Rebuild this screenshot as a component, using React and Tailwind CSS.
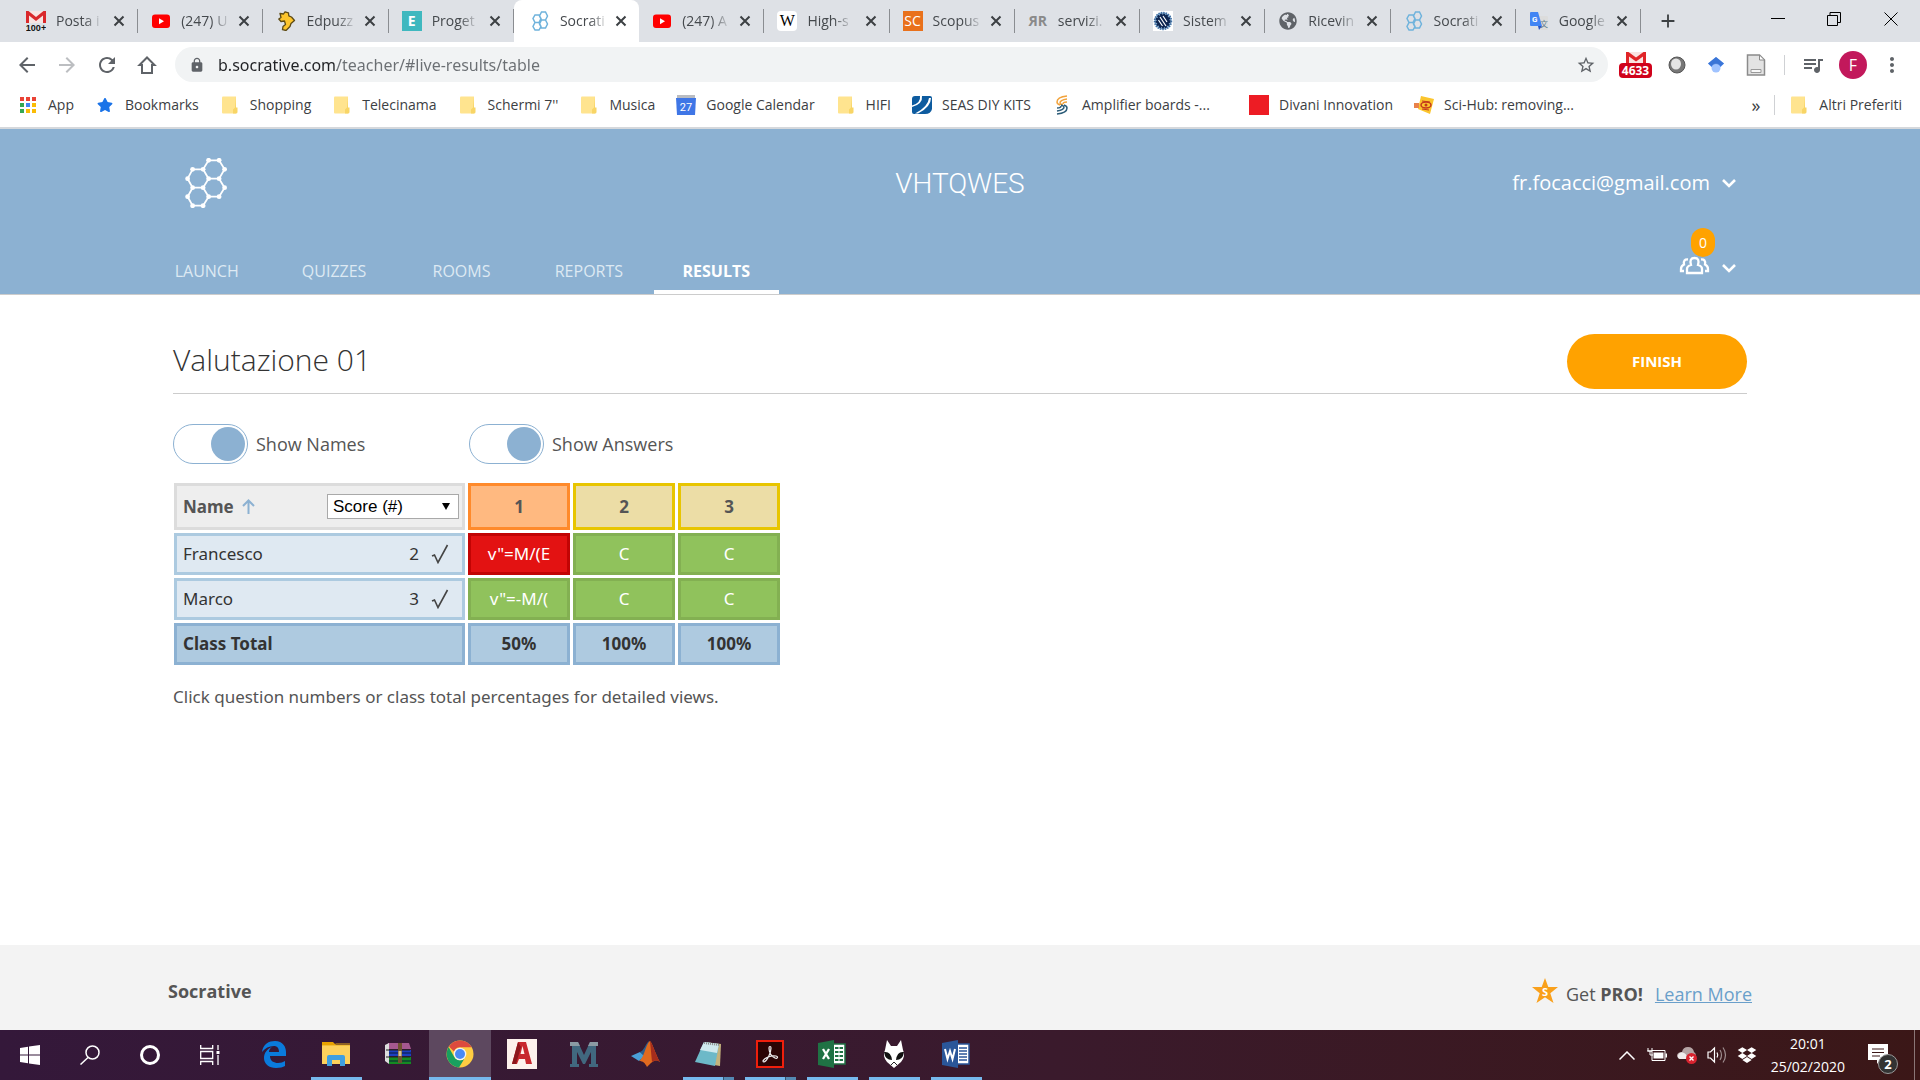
import { MdArrowBack, MdArrowForward, MdRefresh, MdLock, MdStarBorder, MdMoreVert, MdQueueMusic, MdAdd } from 'react-icons/md'
import { FaDropbox, FaGlobeAmericas, FaStar } from 'react-icons/fa'

/* ---------- favicons ---------- */

const GmailIcon = () => (
  <svg viewBox="0 0 20 20" className="h-5 w-5">
    <path d="M0 0h20v12H0z" fill="#f6e4e2" />
    <path d="M0 12V0h2.500L10 6l7.500-6H20v12h-3V4.500L10 10 3 4.500V12z" fill="#d9282b" />
    <text x="10" y="19.500" textAnchor="middle" fontSize="9" fontWeight="700" fontFamily="Liberation Sans, sans-serif" fill="#111">100+</text>
  </svg>
)

const YoutubeIcon = () => (
  <svg viewBox="0 0 20 20" className="h-5 w-5">
    <rect x="1" y="3.500" width="18" height="13.500" rx="3" fill="#f00" />
    <path d="M8 7.300v6l5-3z" fill="#fff" />
  </svg>
)

const EdpuzzleIcon = () => (
  <svg viewBox="0 0 20 20" className="h-5 w-5">
    <path
      d="M4 2.500L7.500 3 9 .8l3.500 1 .3 3L15.500 6l3 3.500-3.500 3-1 3-4 4-3.500-.8L7 15.500l2.500-2L8.500 10 5 10.500 2.800 8 5 6.500z"
      fill="#fdc52c"
      stroke="#5d4a15"
      strokeWidth="1.300"
      strokeLinejoin="round"
    />
  </svg>
)

const LetterIcon = ({ bg, color, children }) => (
  <span className={`flex h-5 w-5 items-center justify-center text-sm leading-5 ${bg} ${color}`}>{children}</span>
)

const SocrativeIcon = () => (
  <svg viewBox="0 0 20 20" className="h-5 w-5" fill="none" stroke="#6fb3dc" strokeWidth="1.500">
    <path d="M11.500 1h4l2 4-2 4h-4l-2-4zM11.500 9h4l2 4-2 4h-4l-2-4zM5 4h4l2 3.500L9 11.500H5L3 7.500zM5 11.500h4l2 4-2 3.500H5l-2-3.500z" />
  </svg>
)

const WikiIcon = () => (
  <span className="flex h-5 w-5 items-center justify-center rounded bg-white font-['Liberation_Serif',serif] text-base leading-5 text-black">W</span>
)

const SealIcon = () => (
  <svg viewBox="0 0 20 20" className="h-5 w-5">
    <path d="M0 0h20v20H0z" fill="#fff" />
    <circle cx="10" cy="10" r="8.500" fill="#7fa9cf" stroke="#3f6fa3" strokeWidth="1.500" strokeDasharray="1.500 1" />
    <circle cx="10" cy="10" r="6.500" fill="#0d2550" strokeDasharray="2 1" stroke="#0d2550" strokeWidth="2" />
    <path d="M7 6l6 9M10 5l4 6M5.500 9l4 6" stroke="#fff" strokeWidth="1.200" />
  </svg>
)

const TranslateIcon = () => (
  <svg viewBox="0 0 20 20" className="h-5 w-5">
    <path d="M9 5h9q1 0 1 1v12q0 1-1 1h-6z" fill="#dcdcdc" />
    <text x="11" y="16" fontSize="8" fontFamily="Noto Sans CJK SC, sans-serif" fill="#607d8b">文</text>
    <path d="M2 1h7l4 14H2q-1 0-1-1V2q0-1 1-1z" fill="#4285f4" />
    <path d="M9 15h4l-3 4z" fill="#2a56c6" />
    <text x="3" y="11" fontSize="8" fontWeight="700" fontFamily="Roboto, sans-serif" fill="#fff">G</text>
  </svg>
)

const tabs = [
  { title: 'Posta i', icon: <GmailIcon /> },
  { title: '(247) U', icon: <YoutubeIcon /> },
  { title: 'Edpuzz', icon: <EdpuzzleIcon /> },
  { title: 'Proget', icon: <LetterIcon bg="bg-[#3fb8bf]" color="text-white font-bold">E</LetterIcon> },
  { title: 'Socrati', icon: <SocrativeIcon />, active: true },
  { title: '(247) A', icon: <YoutubeIcon /> },
  { title: 'High-s', icon: <WikiIcon /> },
  { title: 'Scopus', icon: <LetterIcon bg="bg-[#e9711c]" color="text-white">SC</LetterIcon> },
  { title: 'servizi.', icon: <LetterIcon bg="" color="text-[#8a8a8a] font-bold">ЯR</LetterIcon> },
  { title: 'Sistem', icon: <SealIcon /> },
  { title: 'Ricevin', icon: <FaGlobeAmericas className="h-[18px] w-5 text-[#5f6368]" /> },
  { title: 'Socrati', icon: <SocrativeIcon /> },
  { title: 'Google', icon: <TranslateIcon /> },
]

function Tab({ title, icon, active }) {
  return (
    <div
      className={`flex min-w-0 items-center pr-3 ${
        active ? 'rounded-t-lg bg-white pl-4' : 'my-[9px] border-r border-[#8a8d91] pl-[13px]'
      }`}
    >
      <span className="shrink-0">{icon}</span>
      <a
        href="#"
        className="ml-[10px] whitespace-nowrap text-sm leading-6 text-[#45494d] [mask-image:linear-gradient(to_right,#000_65%,#0003)]"
      >
        {title}
      </a>
      <button aria-label="Close tab" className="ml-auto shrink-0">
        <svg viewBox="0 0 12 12" className="h-3 w-3" stroke="#3c4043" strokeWidth="2"><path d="M1.500 1.500l9 9M10.500 1.500l-9 9" /></svg>
      </button>
    </div>
  )
}

function TabStrip() {
  return (
    <div className="flex h-[42px] justify-between bg-[#dee1e6]">
      <div className="ml-[13px] grid max-w-[1628px] flex-1 grid-cols-13">
        {tabs.map((tab, i) => (
          <Tab key={i} {...tab} />
        ))}
      </div>
      <button aria-label="New tab" className="ml-4 mr-auto text-[#3c4043]">
        <MdAdd className="h-[22px] w-[22px]" />
      </button>
      <div className="flex pb-1">
        <button aria-label="Minimize" className="flex w-14 items-center justify-center">
          <svg viewBox="0 0 14 14" className="h-[14px] w-[14px]"><path d="M0 6.500h14" stroke="#000" /></svg>
        </button>
        <button aria-label="Restore" className="flex w-14 items-center justify-center">
          <svg viewBox="0 0 14 14" className="h-[14px] w-[14px]" fill="none" stroke="#000">
            <path d="M.5 3.500h10v10H.5zM3 3.500v-3h10.500v10H11" />
          </svg>
        </button>
        <button aria-label="Close" className="flex w-[58px] items-center justify-center">
          <svg viewBox="0 0 14 14" className="h-[14px] w-[14px]"><path d="M.5.5l13 13M13.500.5l-13 13" stroke="#000" /></svg>
        </button>
      </div>
    </div>
  )
}

/* ---------- toolbar ---------- */

function Toolbar() {
  return (
    <div className="flex h-[45px] items-center pl-[15px] pr-4 text-[#5f6368]">
      <div className="flex gap-4">
        <button aria-label="Back"><MdArrowBack className="h-6 w-6" /></button>
        <button aria-label="Forward" className="text-[#bcbec1]"><MdArrowForward className="h-6 w-6" /></button>
        <button aria-label="Reload"><MdRefresh className="h-6 w-6" /></button>
        <button aria-label="Home">
          <svg viewBox="0 0 24 24" className="h-6 w-6" fill="none" stroke="currentColor" strokeWidth="2">
            <path d="M4.500 12H7v8h10v-8h2.500L12 4.500z" />
          </svg>
        </button>
      </div>
      <div className="ml-4 flex h-[35px] flex-1 items-center rounded-full bg-[#f1f3f4] pl-[14px] pr-3">
        <label htmlFor="address" aria-label="Address"><MdLock className="h-4 w-4" /></label>
        {/* host name is darker than the path */}
        <input
          id="address"
          type="text"
          defaultValue="b.socrative.com/teacher/#live-results/table"
          className="ml-[13px] flex-1 bg-[linear-gradient(to_right,#202124_119px,#6b6f73_119px)] bg-clip-text font-['Noto_Sans',sans-serif] text-base leading-6 text-transparent caret-black outline-none"
        />
        <button aria-label="Bookmark this page"><MdStarBorder className="h-5 w-5" /></button>
      </div>
      <div className="ml-[11px] flex items-center">
        <button aria-label="Gmail checker" className="flex w-[33px] flex-col items-center">
          <svg viewBox="0 0 20 11" className="h-[11px] w-5">
            <path d="M0 0h20v11H0z" fill="#f9e3e1" />
            <path d="M0 11V0h2.500L10 5.500 17.500 0H20v11h-3V4.500L10 9.500 3 4.500V11z" fill="#e02427" />
          </svg>
          <span className="w-full rounded-sm bg-[#d0021b] text-center text-xs font-bold leading-[15px] text-white">4633</span>
        </button>
        <button aria-label="Opacity extension" className="ml-4">
          <svg viewBox="0 0 18 18" className="h-[18px] w-[18px]">
            <circle cx="9" cy="9" r="8" fill="#777" />
            <ellipse cx="8" cy="8" rx="5" ry="5.500" fill="#e4e4e4" />
            <circle cx="9" cy="9" r="8" fill="none" stroke="#555" strokeWidth="1" />
          </svg>
        </button>
        <button aria-label="Google Scholar" className="ml-5">
          <svg viewBox="0 0 20 20" className="h-5 w-5">
            <path d="M10 2l8 6.500-3.500 3.500h-9L2 8.500z" fill="#4285f4" />
            <circle cx="10" cy="13" r="4.500" fill="#a0c3ff" />
            <path d="M5.500 11q4.500-4 9 0L18 8.500 10 2 2 8.500z" fill="#356ac3" opacity=".6" />
          </svg>
        </button>
        <button aria-label="Page notes" className="ml-5">
          <svg viewBox="0 0 20 22" className="h-[22px] w-5">
            <path d="M1.500 1h12l5 5v15h-17z" fill="#e3e3e3" stroke="#8b8b8b" strokeWidth="1.500" />
            <path d="M13.500 1v5h5z" fill="#fff" stroke="#8b8b8b" />
            <path d="M5 15.500h10v3H5z" fill="#f8f8f8" stroke="#999" />
          </svg>
        </button>
        <span className="ml-[18px] h-5 w-px bg-[#cfd1d4]" />
        <button aria-label="Media controls" className="ml-4"><MdQueueMusic className="h-6 w-6" /></button>
        <button aria-label="Profile" className="ml-[14px] flex h-7 w-7 items-center justify-center rounded-full bg-[#c2185b] text-base leading-none text-white">F</button>
        <button aria-label="Menu" className="ml-[13px]"><MdMoreVert className="h-6 w-6" /></button>
      </div>
    </div>
  )
}

/* ---------- bookmarks ---------- */

const FolderIcon = () => (
  <svg viewBox="0 0 16 18" className="h-[18px] w-4">
    <path d="M1 .5h13v17H1q-1 0-1-1v-15q0-1 1-1z" fill="#ffe48f" />
    <path d="M14 .5v11h1.500v4.500q0 1.500-1.500 1.500h-3v-4l2-2z" fill="#f8d566" />
  </svg>
)

const appColors = ['#ea4335', '#ea4335', '#ea4335', '#34a853', '#4285f4', '#fbbc05', '#34a853', '#fbbc05', '#fbbc05']

const AppsIcon = () => (
  <svg viewBox="0 0 16 16" className="h-4 w-4">
    {appColors.map((color, i) => (
      <rect key={i} x={(i % 3) * 6} y={Math.floor(i / 3) * 6} width="4" height="4" fill={color} />
    ))}
  </svg>
)

const CalendarIcon = () => (
  <svg viewBox="0 0 20 20" className="h-5 w-5">
    <path d="M1 0h18v4H1z" fill="#b9bcc2" />
    <path d="M0 3h20l-1 17H1z" fill="#3f76e6" />
    <text x="10" y="16" textAnchor="middle" fontSize="11" fontFamily="Roboto, sans-serif" fill="#fff">27</text>
  </svg>
)

const SeasIcon = () => (
  <svg viewBox="0 0 20 20" className="h-5 w-5">
    <path d="M3 1h15q2 0 2 2v11q-1 5-7 5H2q-2 0-2-2V4q0-3 3-3z" fill="#0d5b9f" />
    <path d="M8 1h2q1 8-10 11v-1.500Q9 8 8 1zM17 3h2q0 9-13 15.500H3Q16 12 17 3z" fill="#fff" />
  </svg>
)

const AmplifierIcon = () => (
  <svg viewBox="0 0 14 20" className="h-5 w-[14px]" fill="none" strokeWidth="1.500">
    <path d="M12 1Q2 2 2 7q0 2 3 3M12 4Q5 5 5 8q0 1 3 2M12 7Q8 7 8 9" stroke="#f2a33c" />
    <path d="M2 19q10-1 10-6 0-2-3-3M2 16q7-1 7-4 0-1-3-2M2 13q4 0 4-2" stroke="#2c5c78" />
  </svg>
)

const SciHubIcon = () => (
  <svg viewBox="0 0 20 20" className="h-5 w-5">
    <path d="M7 1l13 3-4 15L4 14z" fill="#fbc52d" />
    <path d="M0 8h5v5H0z" fill="#e9824a" />
    <ellipse cx="12" cy="10" rx="5" ry="3" fill="none" stroke="#c4391d" strokeWidth="1.500" />
    <circle cx="12" cy="10" r="1.500" fill="#c4391d" />
    <path d="M8 6l8 1M8 14l7 1" stroke="#c4391d" />
  </svg>
)

const bookmarks = [
  { label: 'App', icon: <AppsIcon /> },
  { label: 'Bookmarks', icon: <FaStar className="h-4 w-4 text-[#1a73e8]" /> },
  { label: 'Shopping', icon: <FolderIcon /> },
  { label: 'Telecinama', icon: <FolderIcon /> },
  { label: "Schermi 7''", icon: <FolderIcon /> },
  { label: 'Musica', icon: <FolderIcon /> },
  { label: 'Google Calendar', icon: <CalendarIcon /> },
  { label: 'HIFI', icon: <FolderIcon /> },
  { label: 'SEAS DIY KITS', icon: <SeasIcon /> },
  { label: 'Amplifier boards -...', icon: <AmplifierIcon />, truncated: true },
  { label: 'Divani Innovation', icon: <span className="block h-5 w-5 bg-[#ed1c24]" /> },
  { label: 'Sci-Hub: removing...', icon: <SciHubIcon />, truncated: true },
]

const Bookmark = ({ label, icon, truncated }) => (
  <a href="#" className={`flex items-center gap-[10px] whitespace-nowrap ${truncated ? 'min-w-[176px]' : ''}`}>
    <span className="flex w-5 justify-center">{icon}</span>
    {label}
  </a>
)

function BookmarksBar() {
  return (
    <div className="flex h-[42px] items-center justify-between border-b-2 border-[#d5d8dc] pb-1 pl-[18px] pr-[18px] text-sm text-[#3c4043]">
      <nav aria-label="Bookmarks" className="flex items-center gap-[21px]">
        {bookmarks.map((b) => (
          <Bookmark key={b.label} {...b} />
        ))}
      </nav>
      <div className="flex items-center">
        <button aria-label="More bookmarks" className="text-lg leading-5">»</button>
        <span className="mx-[14px] h-5 w-px bg-[#cfd1d4]" />
        <Bookmark label="Altri Preferiti" icon={<FolderIcon />} />
      </div>
    </div>
  )
}

/* ---------- Socrative header ---------- */

const logoNodes = [
  [23.6, 2.3], [34.1, 2.3], [7.6, 11.3], [18.1, 11.3], [39.6, 11.3], [2.6, 20.7], [23.6, 20.7], [34.1, 20.7],
  [7.6, 29.7], [18.1, 29.7], [39.6, 29.7], [2.6, 38.7], [23.6, 38.7], [34.1, 38.7], [7.6, 47.7], [18.1, 47.7],
]

const Logo = () => (
  <svg viewBox="0 0 42 50" className="h-[50px] w-[42px]">
    <path
      d="M23.600 2.300H34.100L39.600 11.300 34.100 20.700H23.600L18.100 11.300zM7.600 11.300H18.100L23.600 20.700 18.100 29.700H7.600L2.600 20.700zM34.100 20.700L39.600 29.700 34.100 38.700H23.600L18.100 29.700M7.600 29.700L2.600 38.700 7.600 47.700H18.100L23.600 38.700"
      fill="none"
      stroke="#fff"
      strokeWidth="1.800"
    />
    {logoNodes.map(([x, y]) => (
      <circle key={`${x}-${y}`} cx={x} cy={y} r="2.400" fill="#fff" />
    ))}
  </svg>
)

const Chevron = () => (
  <svg viewBox="0 0 14 9" className="h-[9px] w-[14px]" fill="none" stroke="#fff" strokeWidth="2.600">
    <path d="M1 1l6 6 6-6" />
  </svg>
)

const navItems = ['LAUNCH', 'QUIZZES', 'ROOMS', 'REPORTS', 'RESULTS']

function Header() {
  return (
    <header className="border-b border-[#ccc] bg-[#8cb1d2] text-white">
      <div className="mx-auto max-w-[1574px] pt-[29px]">
        <div className="grid grid-cols-3 items-center">
          <a href="#" aria-label="Socrative home" className="ml-3 justify-self-start"><Logo /></a>
          <div className="justify-self-center pt-[2px] font-[Roboto,sans-serif] text-[28px] font-light leading-8">VHTQWES</div>
          <button className="mr-[11px] flex items-center gap-3 justify-self-end text-xl leading-7">
            fr.focacci@gmail.com
            <Chevron />
          </button>
        </div>
        <div className="mt-5 flex items-end justify-between">
          <nav className="-ml-[29px] grid max-w-[635px] flex-1 grid-cols-5 gap-[2px]">
            {navItems.map((item) => (
              <a
                key={item}
                href="#"
                className={`border-b-4 pb-[7px] text-center text-base leading-6 ${
                  item === 'RESULTS' ? 'border-white font-bold' : 'border-transparent text-[#dde9f3]'
                }`}
              >
                {item}
              </a>
            ))}
          </nav>
          <button aria-label="Students" className="mb-[19px] mr-[11px] flex h-[47px] items-end gap-3">
            <span className="relative">
              <svg viewBox="0 0 31 19" className="h-[19px] w-[31px]" fill="none" stroke="#fff" strokeWidth="2.300">
                <path d="M12 9Q10 2 15.500 2T19 9q4 1 4 4v4H8v-4q0-3 4-4z" />
                <path d="M9 3.500Q4 3 5 8.500 2 10 2 13v2h3M22 3.500q5-.5 4 5 3 1.500 3 4.500v2h-3" />
              </svg>
              <span className="absolute -top-[28px] left-3 flex h-[29px] w-6 items-center justify-center rounded-full bg-[#ffa200] text-sm">0</span>
            </span>
            <span className="mb-[2px]"><Chevron /></span>
          </button>
        </div>
      </div>
    </header>
  )
}

/* ---------- results ---------- */

function Toggle({ id, label }) {
  return (
    <div className="flex items-center gap-2">
      <input
        id={id}
        type="checkbox"
        defaultChecked
        className="relative h-10 w-[75px] appearance-none rounded-full border border-[#8cb1d2] bg-white before:absolute before:left-[2px] before:top-[2px] before:h-[34px] before:w-[34px] before:rounded-full before:bg-[#8cb1d2] checked:before:left-[37px]"
      />
      <label htmlFor={id} className="font-['Open_Sans',sans-serif] text-lg text-[#555]">{label}</label>
    </div>
  )
}

const questions = [
  { number: 1, total: '50%', style: 'border-[#ff8a2b] bg-[#ffb980]' },
  { number: 2, total: '100%', style: 'border-[#e8c500] bg-[#ecdda6]' },
  { number: 3, total: '100%', style: 'border-[#e8c500] bg-[#ecdda6]' },
]

const students = [
  { name: 'Francesco', score: 2, answers: [{ text: 'v"=M/(E', correct: false }, { text: 'C', correct: true }, { text: 'C', correct: true }] },
  { name: 'Marco', score: 3, answers: [{ text: 'v"=-M/(', correct: true }, { text: 'C', correct: true }, { text: 'C', correct: true }] },
]

const CheckIcon = () => (
  <svg viewBox="0 0 18 20" className="h-5 w-[18px]" fill="none" stroke="#444" strokeWidth="1.600">
    <path d="M1 12l2.500-1 3.500 7.500L16.500 1" />
  </svg>
)

function ResultsTable() {
  return (
    <table className="-ml-[2px] mt-4 border-separate border-spacing-[3px] text-[17px] leading-6 text-[#333]">
      <thead>
        <tr className="h-[47px] text-[#555]">
          <th className="w-[291px] border-[3px] border-[#dcdcdc] bg-[#eee] p-0">
            <div className="flex items-center justify-between pl-[6px] pr-[3px]">
              <button className="flex items-center gap-2">
                Name
                <svg viewBox="0 0 13 15" className="h-[15px] w-[13px]" fill="none" stroke="#8cb1d2" strokeWidth="2">
                  <path d="M6.500 15V2M1 7l5.500-5.500L12 7" />
                </svg>
              </button>
              <div className="relative">
                <select
                  aria-label="Score format"
                  className="block h-[25px] w-[132px] appearance-none border border-[#a9a9a9] bg-white pl-[5px] font-['Liberation_Sans',Arial,sans-serif] text-[17px] font-normal leading-5 text-black"
                >
                  <option>Score (#)</option>
                  <option>Score (%)</option>
                </select>
                <svg viewBox="0 0 8 7" className="pointer-events-none absolute right-[9px] top-[9px] h-[7px] w-2">
                  <path d="M0 0h8L4 7z" />
                </svg>
              </div>
            </div>
          </th>
          {questions.map((q) => (
            <th key={q.number} className={`w-[102px] border-[3px] p-0 ${q.style}`}>
              <button>{q.number}</button>
            </th>
          ))}
        </tr>
      </thead>
      <tbody>
        {students.map((s) => (
          <tr key={s.name} className="h-[42px]">
            <td className="border-[3px] border-[#accae0] bg-[#dfe9f2] p-0">
              <div className="flex items-center pl-[6px] pr-[13px]">
                <span className="flex-1">{s.name}</span>
                <span className="mr-3">{s.score}</span>
                <CheckIcon />
              </div>
            </td>
            {s.answers.map((a, i) => (
              <td
                key={i}
                className={`border-[3px] p-0 text-center text-white ${
                  a.correct ? 'border-[#83b052] bg-[#90c25c]' : 'border-[#c20404] bg-[#e31212]'
                }`}
              >
                {a.text}
              </td>
            ))}
          </tr>
        ))}
      </tbody>
      <tfoot>
        <tr className="h-[42px] font-bold">
          <td className="border-[3px] border-[#8cb1d2] bg-[#aecae0] p-0 pl-[6px]">Class Total</td>
          {questions.map((q) => (
            <td key={q.number} className="border-[3px] border-[#8cb1d2] bg-[#aecae0] p-0 text-center">
              <button>{q.total}</button>
            </td>
          ))}
        </tr>
      </tfoot>
    </table>
  )
}

function Results() {
  return (
    <main className="mx-auto w-full max-w-[1574px] flex-1 pt-[39px] font-['Noto_Sans',sans-serif]">
      <div className="flex items-start justify-between border-b border-[#ccc] pb-1 font-['Open_Sans',sans-serif]">
        <h1 className="mt-[6px] text-[30px] font-light leading-10 text-[#333]">Valutazione 01</h1>
        <button className="h-[55px] w-[180px] rounded-full bg-[#ffa200] text-[15px] font-bold text-white">FINISH</button>
      </div>
      <div className="mt-[30px] grid w-fit grid-cols-2">
        <div className="w-[296px]"><Toggle id="show-names" label="Show Names" /></div>
        <Toggle id="show-answers" label="Show Answers" />
      </div>
      <ResultsTable />
      <p className="mt-[17px] text-[17px] leading-6 text-[#555]">Click question numbers or class total percentages for detailed views.</p>
    </main>
  )
}

function Footer() {
  return (
    <footer className="bg-[#f3f3f3] text-[#555]">
      <div className="mx-auto flex h-[85px] max-w-[1584px] items-center justify-between pt-3 text-lg leading-6">
        <strong className="mb-[6px]">Socrative</strong>
        <div className="flex items-center">
          <svg viewBox="0 0 26 25" className="mb-[6px] h-[25px] w-[26px]">
            <path d="M13 0l3.300 9H26l-7.700 6.200L21.500 25 13 19.200 4.500 25l3.200-9.800L0 9h9.700z" fill="#f9a01b" />
            <text x="13" y="18" textAnchor="middle" fontSize="11" fontWeight="700" fontFamily="Open Sans, sans-serif" fill="#fff">S</text>
          </svg>
          <span className="ml-2">Get <b>PRO!</b></span>
          <a href="#" className="ml-3 text-[#6a9fca] underline">Learn More</a>
        </div>
      </div>
    </footer>
  )
}

/* ---------- taskbar ---------- */

const pinned = [
  {
    name: 'Edge', icon: (
      <svg viewBox="0 0 26 28" className="h-7 w-[26px]">
        <path d="M1 12C2 4 8 1 14 1c8 0 11 6 11 11v4H9c0 5 4 7 8 7 3 0 5-1 7-2v5c-2 1-5 2-9 2-7 0-12-4-12-10C3 13 6 9 11 7c-2 1-3 3-3 5h10c0-4-2-6-5-6C8 6 4 8 1 12z" fill="#0a7bdc" />
      </svg>
    ),
  },
  {
    name: 'Explorer', open: true, icon: (
      <svg viewBox="0 0 28 24" className="h-6 w-7">
        <path d="M0 0h11l3 3H0z" fill="#e8a200" />
        <path d="M0 3h28v19H0z" fill="#fdd15c" />
        <path d="M0 3h12l2-2H28v3H0z" fill="#e8a911" opacity=".5" />
        <path d="M5 24V15q0-2 2-2h14q2 0 2 2v9h-5v-6h-8v6z" fill="#3f9fe0" />
      </svg>
    ),
  },
  {
    name: 'WinRAR', icon: (
      <svg viewBox="0 0 28 24" className="h-6 w-7">
        <path d="M4 1h21l2 6H5z" fill="#a5588f" />
        <path d="M5 8h22v6H5z" fill="#1c3fc0" />
        <path d="M5 15h22v7H5z" fill="#158a22" />
        <path d="M5 11h22M5 19h22" stroke="#0a1a3a" />
        <path d="M1 3l4-2v21l-4-3z" fill="#ddd" />
        <path d="M2 8h24M2 15h24" stroke="#222" />
        <path d="M14 1h4v20h-4z" fill="#6f5230" />
        <path d="M14.500 9h3v5h-3z" fill="#d8c491" />
      </svg>
    ),
  },
  {
    name: 'Chrome', open: true, active: true, icon: (
      <svg viewBox="0 0 28 28" className="h-7 w-7">
        <circle cx="14" cy="14" r="13.500" fill="#ffcd42" />
        <path d="M14 .5A13.500 13.500 0 0 1 25.700 7.300H14A6.500 6.500 0 0 0 8 11.500L3 6.500A13.500 13.500 0 0 1 14 .5z" fill="#dd4b3e" />
        <path d="M2.600 7A13.500 13.500 0 0 0 13 27.500L18.500 18.500A6.500 6.500 0 0 1 8.400 17.200z" fill="#18a05f" />
        <circle cx="14" cy="14" r="6.300" fill="#f4f4f4" />
        <circle cx="14" cy="14" r="5" fill="#4a8af4" />
      </svg>
    ),
  },
  {
    name: 'AutoCAD', icon: (
      <svg viewBox="0 0 30 30" className="h-[30px] w-[30px]">
        <path d="M0 0h30v30H0z" fill="#fdf1ec" />
        <path d="M11 3h8l6 22h-6l-1-5h-6l-2 5H5zM13.500 15h4l-2-8z" fill="#c8272d" />
        <path d="M5 25l6-22 3 5-5 17z" fill="#8d161c" />
      </svg>
    ),
  },
  {
    name: 'Mathcad', icon: (
      <svg viewBox="0 0 30 28" className="h-7 w-[30px]">
        <path d="M1 2h8l6 13 6-13h8v3h-2v19h2v3h-9v-3h2V12l-6 12h-2L8 12v12h2v3H1v-3h2V5H1z" fill="#41687f" />
        <path d="M1 2h8l2 4H1zM21 2h8v4H19z" fill="#8b9aa3" />
      </svg>
    ),
  },
  {
    name: 'MATLAB', icon: (
      <svg viewBox="0 0 30 28" className="h-7 w-[30px]">
        <path d="M0 16l9-4 5 4-6 5z" fill="#4aa0d8" />
        <path d="M9 12c4-1 6-9 9-11L14 17z" fill="#2a5f8f" />
        <path d="M8 21c5-2 7-18 11-20 3 3 6 15 10 21-5-3-7-1-13 5-2-4-4-6-8-6z" fill="#e06a1f" />
        <path d="M19 1c3 3 6 15 10 21-3-2-5-2-8 0z" fill="#a52d1c" />
      </svg>
    ),
  },
  {
    name: 'Notepad', open: true, stacked: true, icon: (
      <svg viewBox="0 0 28 26" className="h-[26px] w-7">
        <path d="M11 1l16 2-1 22-6-1z" fill="#c3b27c" />
        <path d="M10 1l15 2-4 22L1 21z" fill="#6db9c8" />
        <path d="M10 1l15 2-2 9L6 9z" fill="#cfe9ee" />
        <path d="M10 2l15 2" stroke="#888" strokeDasharray="1 1" strokeWidth="2" />
      </svg>
    ),
  },
  {
    name: 'Acrobat', open: true, stacked: true, icon: (
      <svg viewBox="0 0 28 28" className="h-7 w-7">
        <path d="M1 1h26v26H1z" fill="#2c0505" stroke="#f01f0c" strokeWidth="2" />
        <path d="M7 21c1-3 8-6 13-5 3 1 1 3-1 2-4-2-6-6-6-10 0-2 2-2 2 0 0 5-4 13-7 14-1 0-1 0-1-1z" fill="none" stroke="#eee" strokeWidth="1.200" />
      </svg>
    ),
  },
  {
    name: 'Excel', open: true, icon: (
      <svg viewBox="0 0 28 28" className="h-7 w-7">
        <path d="M14 4h13v20H14z" fill="#fff" stroke="#1f7244" strokeWidth="1.500" />
        <path d="M17 8h8M17 12h8M17 16h8M17 20h8" stroke="#1f7244" strokeWidth="2" />
        <path d="M21 5v18" stroke="#fff" />
        <path d="M0 3l16-3v28L0 25z" fill="#1f7244" />
        <path d="M5 9l6 10M11 9L5 19" stroke="#fff" strokeWidth="2.300" />
      </svg>
    ),
  },
  {
    name: 'Foobar2000', open: true, icon: (
      <svg viewBox="0 0 24 28" className="h-7 w-6">
        <path d="M5 0l4 6h6l4-6 2 10q3 6-2 12l-7 6-7-6Q0 16 3 10z" fill="#fff" />
        <path d="M2 12q7-1 8 8-7 0-8-8zM22 12q-7-1-8 8 7 0 8-8z" fill="#111" />
        <path d="M9 25l3-3 3 3" fill="none" stroke="#222" />
      </svg>
    ),
  },
  {
    name: 'Word', open: true, icon: (
      <svg viewBox="0 0 28 28" className="h-7 w-7">
        <path d="M14 4h13v20H14z" fill="#fff" stroke="#2a5699" strokeWidth="1.500" />
        <path d="M17 8h8M17 11h8M17 14h8M17 17h8M17 20h8" stroke="#2a5699" strokeWidth="1.500" />
        <path d="M0 3l16-3v28L0 25z" fill="#2a5699" />
        <path d="M3 9l2.500 10L8 11l2.500 8L13 9" fill="none" stroke="#fff" strokeWidth="2" />
      </svg>
    ),
  },
]

function TaskbarApp({ name, icon, open, active, stacked }) {
  return (
    <button
      aria-label={name}
      className={`flex w-[62px] flex-col items-center ${active ? 'bg-[#5d485f]' : ''}`}
    >
      <span className="flex flex-1 items-center">{icon}</span>
      <span className={`flex h-[3px] ${active ? 'w-full' : 'w-[51px]'} ${open ? 'bg-[#76b9ed]' : ''} justify-end`}>
        {stacked && <span className="h-full w-[11px] border-l border-[#33536b] bg-[#5489b3]" />}
      </span>
    </button>
  )
}

function Taskbar() {
  return (
    <div className="flex h-[50px] justify-between bg-linear-to-r from-[#34183a] via-[#3a1a2c] via-55% to-[#3b1717] text-white">
      <div className="flex">
        <button aria-label="Start" className="flex w-[60px] items-center justify-center">
          <svg viewBox="0 0 20 20" className="h-5 w-5" fill="#fff">
            <path d="M0 3l8-1.200V9.500H0zM9 1.600L20 0v9.500H9zM0 10.500h8v7.700L0 17zM9 10.500h11V20L9 18.400z" />
          </svg>
        </button>
        <button aria-label="Search" className="flex w-[60px] items-center justify-center">
          <svg viewBox="0 0 20 20" className="h-5 w-5" fill="none" stroke="#fff" strokeWidth="1.500">
            <circle cx="12.500" cy="7.500" r="6.500" />
            <path d="M8 12.500L.5 19.500" />
          </svg>
        </button>
        <button aria-label="Cortana" className="flex w-[60px] items-center justify-center">
          <span className="h-5 w-5 rounded-full border-[3px] border-white" />
        </button>
        <button aria-label="Task view" className="mr-[3px] flex w-[60px] items-center justify-center">
          <svg viewBox="0 0 20 20" className="h-5 w-5" fill="none" stroke="#fff" strokeWidth="1.300">
            <path d="M.7 0v3.500h12V0M.7 20v-3.500h12V20M.7 6.500h12v7H.7zM18 0v5M18 10v10" />
            <path d="M16.500 6h3v3h-3z" fill="#fff" stroke="none" />
          </svg>
        </button>
        {pinned.map((app) => (
          <TaskbarApp key={app.name} {...app} />
        ))}
      </div>
      <div className="flex items-center">
        <button aria-label="Show hidden icons">
          <svg viewBox="0 0 16 9" className="h-[9px] w-4" fill="none" stroke="#fff" strokeWidth="1.500"><path d="M.5 8.500L8 1l7.500 7.500" /></svg>
        </button>
        <svg viewBox="0 0 20 14" className="ml-3 h-[14px] w-5">
          <path d="M5 2.500h13v10H5z" fill="none" stroke="#fff" />
          <path d="M6.500 4.500h10v6h-10z" fill="#fff" />
          <path d="M18.500 5.500h1.500v4h-1.500z" fill="#fff" />
          <path d="M1 0v3h4V0M3 3v4h3M0 3h5" fill="none" stroke="#fff" />
        </svg>
        <svg viewBox="0 0 20 18" className="ml-[10px] h-[18px] w-5">
          <path d="M5 6q1-5 6-5t6 5q2 1 2 4l-8 3H3q-3-1-3-4 1-3 5-3z" fill="#b5a5a5" />
          <path d="M1 9q2-4 6-2 3 1 3 6H3q-3-1-2-4z" fill="#f0eded" />
          <circle cx="14.500" cy="12.500" r="5.500" fill="#d8232f" />
          <path d="M12.500 10.500l4 4M16.500 10.500l-4 4" stroke="#fff" strokeWidth="1.400" />
        </svg>
        <svg viewBox="0 0 20 18" className="ml-[10px] h-[18px] w-5" fill="none" stroke="#fff" strokeWidth="1.200">
          <path d="M1 6h2.500l4-4v14l-4-4H1zM10 6.500q1.500 2.500 0 5" />
          <path d="M13 4q3 5 0 10M16 1.500q5 7.500 0 15" opacity=".5" />
        </svg>
        <FaDropbox className="ml-[10px] h-[18px] w-5" />
        <div className="ml-[14px] text-center text-sm leading-[23px]">
          <div>20:01</div>
          <div>25/02/2020</div>
        </div>
        <button aria-label="Notifications" className="ml-[23px] mr-[14px] mt-2">
          <svg viewBox="0 0 32 30" className="h-[30px] w-8">
            <path d="M0 0h20v16h-8l-3 4v-4H0z" fill="#fff" />
            <path d="M4 5h12M4 8.500h12M4 12h8" stroke="#3b1717" />
            <circle cx="20" cy="20" r="9.500" fill="#333" stroke="#999" />
            <text x="20" y="25" textAnchor="middle" fontSize="13" fontWeight="700" fontFamily="Open Sans, sans-serif" fill="#fff">2</text>
          </svg>
        </button>
        <span className="mr-[5px] h-full w-px bg-[#8a7676]" />
      </div>
    </div>
  )
}

export default function App() {
  return (
    <div className="flex min-h-screen flex-col bg-white font-['Open_Sans',sans-serif]">
      <TabStrip />
      <Toolbar />
      <BookmarksBar />
      <Header />
      <Results />
      <Footer />
      <Taskbar />
    </div>
  )
}
